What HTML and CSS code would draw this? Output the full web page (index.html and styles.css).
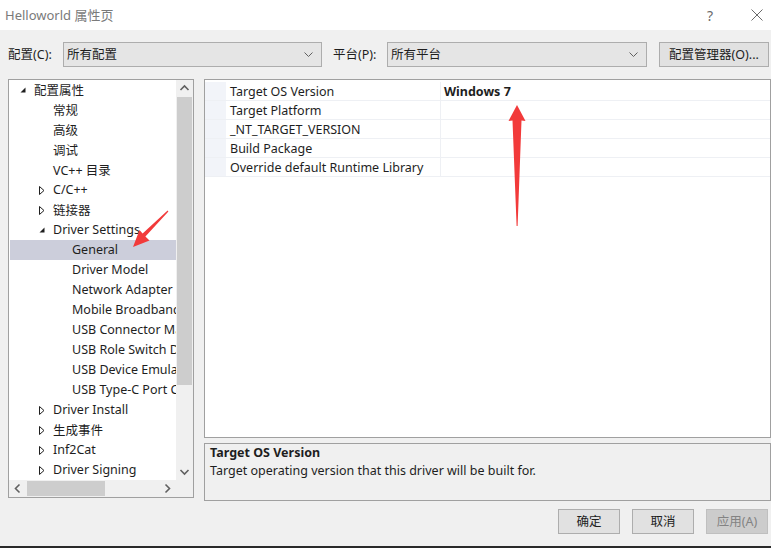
FILE: index.html
```html
<!DOCTYPE html>
<html lang="zh">
<head>
<meta charset="utf-8">
<title>Helloworld 属性页</title>
<link rel="stylesheet" href="styles.css">
</head>
<body>
<div class="window">
  <div class="titlebar">
    <span class="title">Helloworld 属性页</span>
    <span class="tb-help">?</span>
    <svg class="tb-close" width="12" height="12" viewBox="0 0 12 12"><path d="M0.5 0.5 L11.5 11.5 M11.5 0.5 L0.5 11.5" stroke="#6a6a6a" stroke-width="1" fill="none"/></svg>
  </div>

  <div class="toolbar">
    <span class="lbl">配置(C):</span>
    <div class="select sel-config"><span>所有配置</span><svg class="chev" width="9" height="5" viewBox="0 0 9 5"><path d="M0.5 0.5 L4.5 4.5 L8.5 0.5" stroke="#606060" fill="none"/></svg></div>
    <span class="lbl lbl-plat">平台(P):</span>
    <div class="select sel-plat"><span>所有平台</span><svg class="chev" width="9" height="5" viewBox="0 0 9 5"><path d="M0.5 0.5 L4.5 4.5 L8.5 0.5" stroke="#606060" fill="none"/></svg></div>
    <button class="btn btn-mgr">配置管理器(O)...</button>
  </div>

  <div class="main">
    <div class="tree">
      <div class="tree-body">
        <div class="row l1"><span class="exp"><svg width="6" height="6" viewBox="0 0 6 6"><path d="M5.5 0.5 L5.5 5.5 L0.5 5.5 Z" fill="#1e1e1e"/></svg></span>配置属性</div>
        <div class="row l2"><span class="exp"></span>常规</div>
        <div class="row l2"><span class="exp"></span>高级</div>
        <div class="row l2"><span class="exp"></span>调试</div>
        <div class="row l2"><span class="exp"></span>VC++ 目录</div>
        <div class="row l2"><span class="exp"><svg width="6" height="9" viewBox="0 0 6 9"><path d="M0.5 0.5 L5 4.5 L0.5 8.5 Z" fill="none" stroke="#1e1e1e"/></svg></span>C/C++</div>
        <div class="row l2"><span class="exp"><svg width="6" height="9" viewBox="0 0 6 9"><path d="M0.5 0.5 L5 4.5 L0.5 8.5 Z" fill="none" stroke="#1e1e1e"/></svg></span>链接器</div>
        <div class="row l2"><span class="exp"><svg width="6" height="6" viewBox="0 0 6 6"><path d="M5.5 0.5 L5.5 5.5 L0.5 5.5 Z" fill="#1e1e1e"/></svg></span>Driver Settings</div>
        <div class="row l3 selected"><span class="exp"></span>General</div>
        <div class="row l3"><span class="exp"></span>Driver Model</div>
        <div class="row l3"><span class="exp"></span>Network Adapter</div>
        <div class="row l3"><span class="exp"></span>Mobile Broadband</div>
        <div class="row l3"><span class="exp"></span>USB Connector Manager</div>
        <div class="row l3"><span class="exp"></span>USB Role Switch Driver</div>
        <div class="row l3"><span class="exp"></span>USB Device Emulation</div>
        <div class="row l3"><span class="exp"></span>USB Type-C Port Controller</div>
        <div class="row l2"><span class="exp"><svg width="6" height="9" viewBox="0 0 6 9"><path d="M0.5 0.5 L5 4.5 L0.5 8.5 Z" fill="none" stroke="#1e1e1e"/></svg></span>Driver Install</div>
        <div class="row l2"><span class="exp"><svg width="6" height="9" viewBox="0 0 6 9"><path d="M0.5 0.5 L5 4.5 L0.5 8.5 Z" fill="none" stroke="#1e1e1e"/></svg></span>生成事件</div>
        <div class="row l2"><span class="exp"><svg width="6" height="9" viewBox="0 0 6 9"><path d="M0.5 0.5 L5 4.5 L0.5 8.5 Z" fill="none" stroke="#1e1e1e"/></svg></span>Inf2Cat</div>
        <div class="row l2"><span class="exp"><svg width="6" height="9" viewBox="0 0 6 9"><path d="M0.5 0.5 L5 4.5 L0.5 8.5 Z" fill="none" stroke="#1e1e1e"/></svg></span>Driver Signing</div>
      </div>
      <div class="vscroll">
        <svg class="sb-arrow" width="17" height="17" viewBox="0 0 17 17"><path d="M4.5 10 L8.5 6 L12.5 10" stroke="#606060" stroke-width="1.6" fill="none"/></svg>
        <div class="vtrack"><div class="vthumb"></div></div>
        <svg class="sb-arrow" width="17" height="17" viewBox="0 0 17 17"><path d="M4.5 7 L8.5 11 L12.5 7" stroke="#606060" stroke-width="1.6" fill="none"/></svg>
      </div>
      <div class="hscroll">
        <svg class="sb-arrow" width="17" height="17" viewBox="0 0 17 17"><path d="M10.5 4.5 L6.5 8.5 L10.5 12.5" stroke="#606060" stroke-width="1.6" fill="none"/></svg>
        <div class="htrack"><div class="hthumb"></div></div>
        <svg class="sb-arrow" width="17" height="17" viewBox="0 0 17 17"><path d="M6.5 4.5 L10.5 8.5 L6.5 12.5" stroke="#606060" stroke-width="1.6" fill="none"/></svg>
      </div>
      <div class="corner"></div>
    </div>

    <div class="right">
      <div class="grid">
        <div class="grow"><span class="gutter"></span><span class="gname">Target OS Version</span><span class="gval">Windows 7</span></div>
        <div class="grow"><span class="gutter"></span><span class="gname">Target Platform</span><span class="gval"></span></div>
        <div class="grow"><span class="gutter"></span><span class="gname">_NT_TARGET_VERSION</span><span class="gval"></span></div>
        <div class="grow"><span class="gutter"></span><span class="gname">Build Package</span><span class="gval"></span></div>
        <div class="grow"><span class="gutter"></span><span class="gname">Override default Runtime Library</span><span class="gval"></span></div>
      </div>
      <div class="desc">
        <div class="desc-title">Target OS Version</div>
        <div class="desc-text">Target operating version that this driver will be built for.</div>
      </div>
    </div>
  </div>

  <div class="footer">
    <button class="btn btn-foot">确定</button>
    <button class="btn btn-foot">取消</button>
    <button class="btn btn-foot disabled">应用(A)</button>
  </div>

  <div class="taskbar"></div>

  <svg class="annot" width="771" height="548" viewBox="0 0 771 548">
    <polygon points="133,247 139.5,230 142.6,233.4 167.6,210.6 168.4,211.4 145.4,236.6 149.5,240.5" fill="#f23a3a"/>
    <polygon points="517,105 525.5,121 521.5,120.5 517.6,226 516.6,226 512.5,120.5 508.5,121" fill="#f23a3a"/>
  </svg>
</div>
</body>
</html>
```

FILE: styles.css
```css
* { box-sizing: border-box; }
html, body { margin: 0; padding: 0; }
body {
  background: #f0f0f0;
  font-family: "Noto Sans", "Noto Sans CJK SC", sans-serif;
  font-size: 12.5px;
  color: #1e1e1e;
}
.window {
  position: relative;
  width: 771px;
  height: 548px;
  overflow: hidden;
  background: #f0f0f0;
}
.titlebar {
  height: 30px;
  background: #ffffff;
  display: flex;
  align-items: center;
  padding-left: 5px;
}
.title {
  font-size: 13px;
  color: #7a7a7a;
  flex: 1;
  padding-bottom: 1px;
}
.tb-help {
  font-size: 14px;
  color: #6a6a6a;
  margin-right: 38px;
}
.tb-close { margin-right: 8px; }

.toolbar {
  margin-top: 12px;
  height: 25px;
  display: flex;
  align-items: center;
  padding-left: 8px;
}
.lbl { width: 55px; padding-bottom: 2px; }
.lbl-plat { margin-left: 11px; width: 54px; }
.select {
  height: 25px;
  background: #e5e5e5;
  border: 1px solid #adadad;
  display: flex;
  align-items: center;
  justify-content: space-between;
  padding: 0 8px 2px 3px;
}
.select .chev { margin-top: 2px; }
.sel-config { width: 259px; }
.sel-plat { width: 260px; }
.btn {
  font-family: "Noto Sans", "Noto Sans CJK SC", sans-serif;
  font-size: 12.5px;
  color: #1e1e1e;
  background: #e1e1e1;
  border: 1px solid #adadad;
  height: 25px;
  padding: 0 0 2px 0;
}
.btn-mgr { margin-left: 12px; width: 110px; }

.main {
  margin-top: 12px;
  display: flex;
  padding-left: 8px;
}
.tree {
  width: 186px;
  height: 419px;
  border: 1px solid #a0a0a0;
  background: #f0f0f0;
  display: grid;
  grid-template-columns: 167px 17px;
  grid-template-rows: 400px 17px;
}
.tree-body {
  background: #ffffff;
  overflow: hidden;
  padding-left: 1px;
}
.row {
  height: 20px;
  display: flex;
  align-items: center;
  white-space: nowrap;
  padding-bottom: 2px;
}
.row.l1 { padding-left: 10px; }
.row.l2 { padding-left: 29px; }
.row.l3 { padding-left: 48px; }
.row.selected { background: #cccedb; }
.exp {
  width: 14px;
  flex: none;
  display: flex;
  align-items: center;
  padding-top: 2px;
}
.vscroll {
  display: flex;
  flex-direction: column;
  background: #f0f0f0;
}
.sb-arrow { flex: none; display: block; }
.vtrack { flex: 1; padding: 0 1px; }
.vthumb { height: 288px; background: #cdcdcd; }
.hscroll {
  display: flex;
  background: #f0f0f0;
}
.htrack { flex: 1; padding: 1px 0; }
.hthumb { width: 78px; height: 15px; margin-left: 1px; background: #cdcdcd; }
.corner { background: #f0f0f0; }

.right {
  margin-left: 10px;
  width: 567px;
  display: flex;
  flex-direction: column;
}
.grid {
  height: 359px;
  background: #ffffff;
  border: 1px solid #a0a0a0;
  padding-top: 2px;
}
.grow {
  height: 19px;
  display: flex;
  border-bottom: 1px solid #eef0f4;
}
.gutter {
  width: 21px;
  background: #f2f4f9;
  flex: none;
}
.gname {
  width: 215px;
  padding-left: 4px;
  border-right: 1px solid #eef0f4;
  display: flex;
  align-items: center;
  white-space: nowrap;
}
.gval {
  flex: 1;
  padding-left: 3px;
  display: flex;
  align-items: center;
  font-weight: bold;
}
.desc {
  margin-top: 5px;
  height: 58px;
  border: 1px solid #a0a0a0;
  background: #f0f0f0;
  padding: 0 5px;
}
.desc-title { font-weight: bold; height: 18px; line-height: 18px; }
.desc-text { height: 18px; line-height: 18px; }

.footer {
  margin-top: 8px;
  display: flex;
  justify-content: flex-end;
  gap: 12px;
  padding-right: 3px;
}
.btn-foot { width: 62px; height: 25px; }
.btn-foot.disabled {
  background: #cccccc;
  border-color: #bfbfbf;
  color: #838383;
}
.taskbar {
  position: absolute;
  left: 0;
  right: 0;
  bottom: 0;
  height: 2px;
  background: #2a2a2a;
}
.annot {
  position: absolute;
  left: 0;
  top: 0;
  pointer-events: none;
}
```
